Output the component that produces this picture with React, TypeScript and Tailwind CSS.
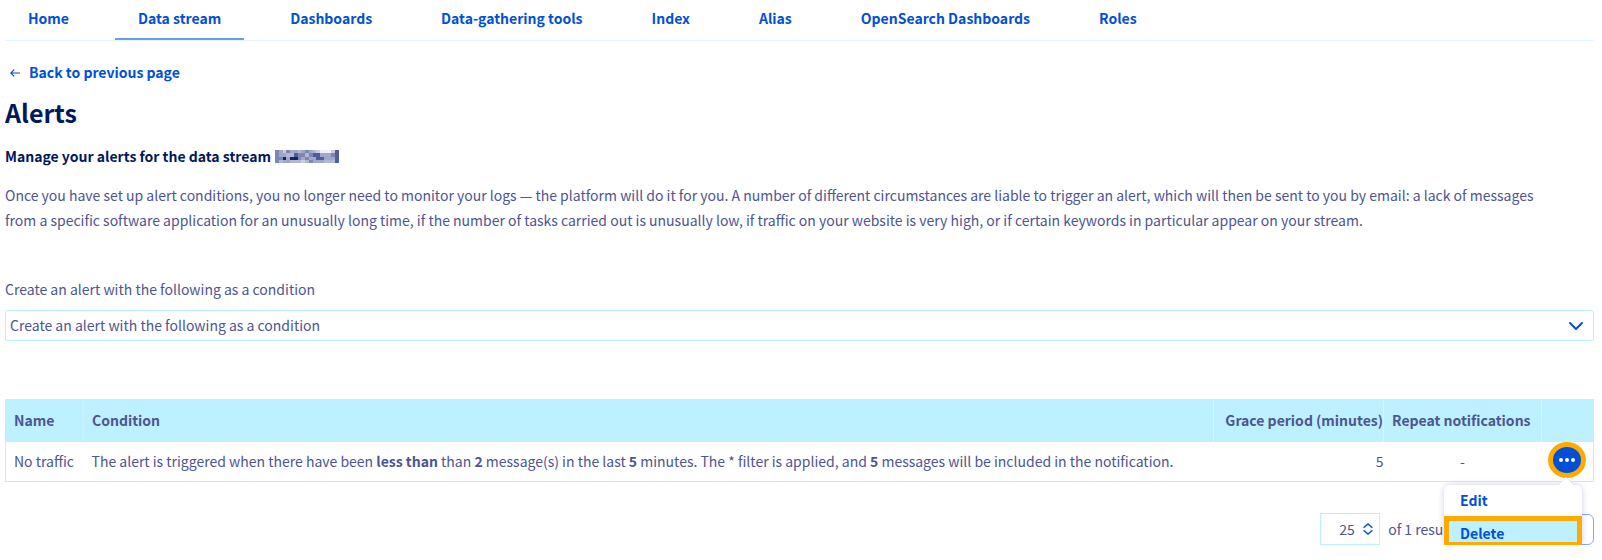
import { ChevronDown } from "lucide-react";

const tabs = [
  "Home",
  "Data stream",
  "Dashboards",
  "Data-gathering tools",
  "Index",
  "Alias",
  "OpenSearch Dashboards",
  "Roles",
];

const ArrowLeft = () => (
  <svg
    viewBox="0 0 10 8"
    className="w-[10px] h-2"
    fill="none"
    stroke="#0050d7"
    strokeWidth="1.2"
  >
    <path d="M10 4H1M4.2 .6L.8 4L4.2 7.4" />
  </svg>
);

const SortArrows = () => (
  <svg
    viewBox="0 0 10 12"
    className="absolute right-[7px] top-[10px] w-[10px] h-3 pointer-events-none"
    fill="none"
    stroke="#0050d7"
    strokeWidth="1.4"
  >
    <path d="M.6 4.8L5 .9L9.4 4.8M.6 7.2L5 11.1L9.4 7.2" />
  </svg>
);

const Redacted = () => {
  const rows = [
    "43143323432100015",
    "43322544245533345",
    "44636643433553335",
    "42332221243332225",
  ];
  const shades = ["#f1f2f8", "#c9cde0", "#b2b8d3", "#a0a8c9", "#7d87b3", "#4f5d98", "#10246b"];

  return (
    <svg
      viewBox="0 0 17 4"
      preserveAspectRatio="none"
      shapeRendering="crispEdges"
      className="w-16 h-[13px]"
    >
      {rows.map((row, y) =>
        row
          .split("")
          .map((shade, x) => (
            <rect key={`${x}-${y}`} x={x} y={y} width="1" height="1" fill={shades[Number(shade)]} />
          ))
      )}
    </svg>
  );
};

const ActionMenu = () => (
  <div className="relative flex justify-center">
    <button
      type="button"
      aria-label="Actions"
      aria-expanded="true"
      className="flex items-center justify-center w-[38px] h-9 rounded-[50%] border-5 border-[#ffaa00] bg-[#0050d7]"
    >
      <svg viewBox="0 0 16 4" className="w-4 h-1" fill="#fff">
        <circle cx="2" cy="2" r="2" />
        <circle cx="8" cy="2" r="2" />
        <circle cx="14" cy="2" r="2" />
      </svg>
    </button>
    <div className="absolute top-[43px] right-[11px] z-10 w-[138px] rounded-md bg-white text-left font-bold text-[#0050d7] shadow-[0_0_6px_rgba(0,14,156,0.2)]">
      <svg viewBox="0 0 16 8" className="absolute -top-2 right-2 w-4 h-2">
        <path d="M0 8L8 0L16 8Z" fill="#fff" />
        <path d="M0 8L8 0L16 8" fill="none" stroke="#e3e4f3" />
      </svg>
      <button type="button" className="block w-full h-[31px] px-4 text-left">
        Edit
      </button>
      <button
        type="button"
        className="block w-full h-[31px] px-[11px] text-left border-5 border-[#ffaa00] bg-[#bef1ff]"
      >
        Delete
      </button>
    </div>
  </div>
);

const App = () => {
  return (
    <main className="pl-[5px] pr-2 text-sm leading-[25px] text-[#4d5592] font-['Noto_Sans_CJK_SC',sans-serif]">
      <nav className="flex gap-[23px] h-[41px] border-b border-[#e0f8ff] font-bold text-[#0050d7]">
        {tabs.map((tab) => (
          <a
            key={tab}
            href="#"
            className={
              tab === "Data stream"
                ? "px-[23px] pt-[6px] border-b-2 border-[#6f9bee]"
                : "px-[23px] pt-[6px]"
            }
          >
            {tab}
          </a>
        ))}
      </nav>

      <a href="#" className="flex w-fit items-center gap-[9px] mt-[19px] pl-[5px] font-bold text-[#0050d7]">
        <ArrowLeft />
        Back to previous page
      </a>

      <h1 className="mt-[11px] text-[25px] leading-8 font-bold text-[#00185e]">Alerts</h1>

      <h2 className="flex items-center gap-1 mt-4 font-bold text-[#00185e]">
        Manage your alerts for the data stream
        <Redacted />
      </h2>

      <p className="mt-[14px] pr-12">
        Once you have set up alert conditions, you no longer need to monitor your logs — the platform
        will do it for you. A number of different circumstances are liable to trigger an alert, which
        will then be sent to you by email: a lack of messages from a specific software application for
        an unusually long time, if the number of tasks carried out is unusually low, if traffic on
        your website is very high, or if certain keywords in particular appear on your stream.
      </p>

      <label htmlFor="condition" className="block mt-11">
        Create an alert with the following as a condition
      </label>
      <div className="relative mt-2">
        <select
          id="condition"
          className="block w-full h-[31px] pl-1 appearance-none border border-[#bef1ff] rounded-xs bg-white"
        >
          <option>Create an alert with the following as a condition</option>
        </select>
        <ChevronDown
          strokeWidth={2}
          className="absolute right-[6px] top-1 size-6 text-[#0050d7] pointer-events-none"
        />
      </div>

      <table className="w-full mt-[58px] border border-[#bef1ff]">
        <thead>
          <tr className="h-[42px] bg-[#bef1ff] text-left">
            <th className="w-[78px] pl-2 whitespace-nowrap border-r border-[#c8f3ff]">Name</th>
            <th className="pl-2 border-r border-[#d2f6ff]">Condition</th>
            <th className="w-[170px] text-right whitespace-nowrap border-r border-[#d2f6ff]">
              Grace period (minutes)
            </th>
            <th className="w-[158px] pl-2 whitespace-nowrap border-r border-[#d2f6ff]">
              Repeat notifications
            </th>
            <th className="w-[52px]"></th>
          </tr>
        </thead>
        <tbody>
          <tr className="h-10">
            <td className="pl-2 whitespace-nowrap">No traffic</td>
            <td className="pl-2">
              The alert is triggered when there have been <b>less than</b> than <b>2</b> message(s) in
              the last <b>5</b> minutes. The * filter is applied, and <b>5</b> messages will be
              included in the notification.
            </td>
            <td className="text-right">5</td>
            <td className="text-center">-</td>
            <td className="align-top">
              <ActionMenu />
            </td>
          </tr>
        </tbody>
      </table>

      <div className="flex items-center justify-end gap-2 mt-[31px]">
        <div className="relative">
          <select
            aria-label="Results per page"
            className="block w-[60px] h-8 pl-[18px] appearance-none border border-[#bef1ff] bg-white"
          >
            <option>25</option>
          </select>
          <SortArrows />
        </div>
        <span>of 1 results</span>
        <button type="button" className="w-[127px] h-[31px] rounded-md border border-[#85a9ee]">
          1
        </button>
      </div>
    </main>
  );
};

export default App;
